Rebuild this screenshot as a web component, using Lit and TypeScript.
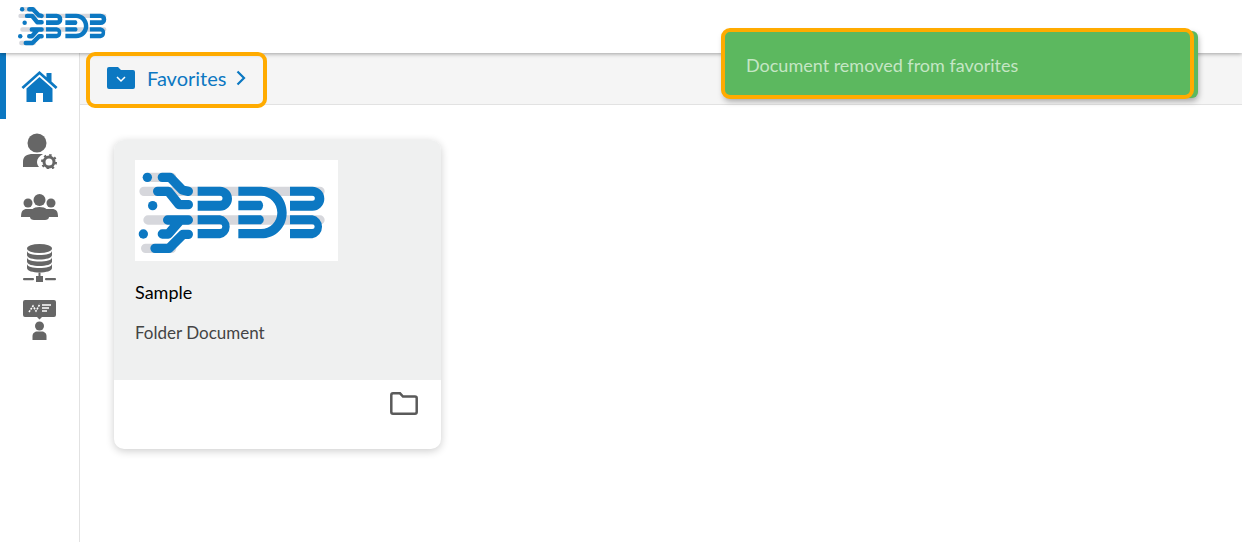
import { LitElement, css, html, svg } from "lit";
import { customElement } from "lit/decorators.js";

const BLUE = "#0c78c2";

// drawn in 3x crop coordinates of the big logo
const logo = (width: number, height: number) => html`
  <svg width=${width} height=${height} viewBox="90 90 609 303">
    <g fill="none" stroke="#d6d7dc" stroke-width="28" stroke-linecap="round">
      <path d="M130 142H200M117 184H645M129 270H645M122 355H200" />
    </g>
    <g fill="none" stroke=${BLUE} stroke-width="28" stroke-linecap="round" stroke-linejoin="round">
      <path d="M172 142H195L232 180L250 184M158 184H190L222 224H250M188 270H250M172 312H190L222 275M150 355H192L234 313H250" />
    </g>
    <g fill=${BLUE}>
      <circle cx="127" cy="142" r="14" />
      <circle cx="143" cy="227" r="14" />
      <circle cx="115" cy="312" r="14" />
      <path d="M278 170H345a36 36 0 0 1 0 72H278V212H345a7.500 7.500 0 0 0 0-15H278Z" />
      <path d="M278 256H345a35 35 0 0 1 0 69H278V297H345a7 7 0 0 0 0-14H278Z" />
      <path d="M555 170H622a36 36 0 0 1 0 72H555V212H622a7.500 7.500 0 0 0 0-15H555Z" />
      <path d="M555 256H622a35 35 0 0 1 0 69H555V297H622a7 7 0 0 0 0-14H555Z" />
      <path d="M400 170H468C512 170 545 204 545 248S512 325 468 325H400V297H468C496 297 517 275 517 248S496 197 468 197H400Z" />
      <path d="M400 212H468a20 20 0 0 1 0 29H400Z" />
      <path d="M400 256H468a15 15 0 0 1 0 27H400Z" />
    </g>
  </svg>
`;

const homeIcon = svg`<path d="M6.500 0h-3v3.800L0 7.200l1.500 1.500L14 -3l0 0z" opacity="0"/>
  <path d="M18 0L0 16l1.800 2L18 3.600 34.200 18l1.800-2-6-5.400V2h-5v4.200Z" />
  <path d="M18 6L5 17.600V31h9.500v-9h7v9H31V17.600Z" />`;

@customElement("app-root")
export class AppRoot extends LitElement {
  static styles = css`
    :host {
      display: block;
      position: relative;
      height: 542px;
      overflow: hidden;
      background: #fff;
      font-family: "Lato", "Noto Sans", sans-serif;
    }
    .topbar {
      height: 53px;
      position: relative;
      z-index: 2;
      background: #fff;
      box-shadow: 0 1px 4px rgba(0, 0, 0, 0.35);
      padding: 1px 0 0 16px;
      box-sizing: border-box;
    }
    .body {
      display: flex;
      height: 489px;
    }
    .sidebar {
      width: 80px;
      flex: none;
      box-sizing: border-box;
      border-right: 1px solid #e2e2e2;
      display: flex;
      flex-direction: column;
    }
    .nav {
      display: flex;
      justify-content: center;
      color: #666;
      padding-left: 0;
      box-sizing: border-box;
    }
    .nav.home {
      height: 66px;
      border-left: 6px solid ${css([BLUE] as unknown as TemplateStringsArray)};
      padding: 17px 6px 0 0;
      color: ${css([BLUE] as unknown as TemplateStringsArray)};
    }
    .nav.user {
      margin-top: 14px;
    }
    .nav.team {
      margin-top: 25px;
    }
    .nav.data {
      margin-top: 24px;
    }
    .nav.show {
      margin-top: 17px;
    }
    .main {
      flex: 1;
      min-width: 0;
    }
    .crumbs {
      height: 52px;
      box-sizing: border-box;
      background: #f5f5f5;
      border-bottom: 1px solid #e2e2e2;
      display: flex;
      align-items: center;
      gap: 12px;
      padding: 0 0 1px 27px;
      color: ${css([BLUE] as unknown as TemplateStringsArray)};
      font-size: 20px;
    }
    .crumbs .chev {
      margin-left: -2px;
    }
    .card {
      width: 327px;
      height: 309px;
      margin: 35px 0 0 34px;
      border-radius: 10px;
      overflow: hidden;
      background: #fff;
      box-shadow: 0 2px 8px rgba(0, 0, 0, 0.2);
    }
    .card-top {
      height: 240px;
      box-sizing: border-box;
      background: #eff0f0;
      padding: 20px 21px 0;
    }
    .thumb {
      width: 203px;
      height: 101px;
      background: #fff;
      display: block;
    }
    .title {
      margin-top: 19px;
      font-size: 18px;
      line-height: 24px;
      color: #000;
    }
    .sub {
      margin-top: 17px;
      font-size: 17px;
      line-height: 24px;
      color: #444;
    }
    .card-foot {
      display: flex;
      justify-content: flex-end;
      padding: 12px 23px 0 0;
    }
    .toast {
      position: absolute;
      left: 724px;
      top: 31px;
      width: 474px;
      height: 67px;
      box-sizing: border-box;
      z-index: 4;
      background: #5cb85f;
      border-radius: 6px;
      color: #c5e6c5;
      font-size: 18px;
      display: flex;
      align-items: center;
      padding-left: 22px;
      box-shadow: 0 3px 6px rgba(0, 0, 0, 0.35);
    }
    .mark {
      position: absolute;
      z-index: 5;
      box-sizing: border-box;
      border: 4px solid #ffab00;
      border-radius: 9px;
      pointer-events: none;
    }
    .mark.crumb {
      left: 86px;
      top: 52px;
      width: 181px;
      height: 56px;
    }
    .mark.msg {
      left: 721px;
      top: 28px;
      width: 473px;
      height: 71px;
    }
  `;

  render() {
    return html`
      <header class="topbar">${logo(97, 48)}</header>
      <div class="body">
        <nav class="sidebar">
          <div class="nav home">
            <svg width="37" height="32" viewBox="0 -1 36 32" fill="currentColor">${homeIcon}</svg>
          </div>
          <div class="nav user">
            <svg width="36" height="36" viewBox="0 0 36 36" fill="currentColor">
              <circle cx="15" cy="10" r="9.500" />
              <path d="M1 34V29C1 23 5 21 11 21H21C17 23 15 26 15 29C15 31 16 33 17 34Z" />
              <circle cx="27" cy="29" r="5" fill="none" stroke="currentColor" stroke-width="3" />
              <circle cx="27" cy="29" r="7" fill="none" stroke="currentColor" stroke-width="2" stroke-dasharray="2.400 3.100" />
            </svg>
          </div>
          <div class="nav team">
            <svg width="37" height="26" viewBox="0 0 37 26" fill="currentColor">
              <circle cx="18.500" cy="6" r="6" />
              <circle cx="7" cy="9" r="4.500" />
              <circle cx="30" cy="9" r="4.500" />
              <path d="M0 23C0 17 2 15 6 15H31C35 15 37 17 37 23Z" />
              <path d="M9 21C9 16 12 13 18.500 13S28 16 28 21V23C28 25 26 26 24 26H13C11 26 9 25 9 23Z" />
            </svg>
          </div>
          <div class="nav data">
            <svg width="33" height="39" viewBox="0 0 33 39" fill="currentColor">
              <ellipse cx="16.500" cy="4.500" rx="12.500" ry="4.500" />
              <path d="M4 6.500C4 10 10 11 16.500 11S29 10 29 6.500V11C29 14 23 15.500 16.500 15.500S4 14 4 11Z" />
              <path d="M4 13C4 16.500 10 17.500 16.500 17.500S29 16.500 29 13V17.500C29 20.500 23 22 16.500 22S4 20.500 4 17.500Z" />
              <path d="M4 19.500C4 23 10 24 16.500 24S29 23 29 19.500V24C29 27 23 28.500 16.500 28.500S4 27 4 24Z" />
              <path d="M15.500 28.500H17.500V32H20V38H13V32H15.500Z" />
              <rect x="0" y="34" width="11" height="2.200" rx="1" />
              <rect x="22" y="34" width="11" height="2.200" rx="1" />
            </svg>
          </div>
          <div class="nav show">
            <svg width="33" height="40" viewBox="0 0 33 40" fill="currentColor">
              <path d="M2 0H31a2 2 0 0 1 2 2V15a2 2 0 0 1-2 2H19L16.500 19.500 14 17H2a2 2 0 0 1-2-2V2a2 2 0 0 1 2-2Z" />
              <path d="M6 12L10 6L13 11L17 4" fill="none" stroke="#fff" stroke-width="1.600" stroke-dasharray="2 1" />
              <path d="M19 5H28M19 8H26M19 11H24" fill="none" stroke="#fff" stroke-width="1.400" />
              <circle cx="16.500" cy="26" r="4.500" />
              <path d="M9.500 40V36C9.500 33 12 31.500 14 31.500H19C21 31.500 23.500 33 23.500 36V40Z" />
            </svg>
          </div>
        </nav>
        <main class="main">
          <div class="crumbs">
            <svg width="28" height="22" viewBox="0 0 28 22" fill="currentColor">
              <path d="M2 0H11L14 3H26a2 2 0 0 1 2 2V20a2 2 0 0 1-2 2H2a2 2 0 0 1-2-2V2a2 2 0 0 1 2-2Z" />
              <path d="M10 10L14 14L18 10" fill="none" stroke="#fff" stroke-width="1.500" />
            </svg>
            <span>Favorites</span>
            <svg class="chev" width="10" height="16" viewBox="0 0 10 16" fill="none" stroke="currentColor" stroke-width="2.200">
              <path d="M1.500 1.500L8 8L1.500 14.500" />
            </svg>
          </div>
          <article class="card">
            <div class="card-top">
              <div class="thumb">${logo(203, 101)}</div>
              <div class="title">Sample</div>
              <div class="sub">Folder Document</div>
            </div>
            <div class="card-foot">
              <svg width="28" height="23" viewBox="0 0 28 23" fill="none" stroke="#5a5a5a" stroke-width="2.500">
                <path d="M1.300 20V3C1.300 2 2 1.300 3 1.300H10L13 4.500H25C26 4.500 26.700 5.200 26.700 6V20C26.700 21 26 21.700 25 21.700H3C2 21.700 1.300 21 1.300 20Z" />
              </svg>
            </div>
          </article>
        </main>
      </div>
      <div class="toast">Document removed from favorites</div>
      <div class="mark crumb"></div>
      <div class="mark msg"></div>
    `;
  }
}
